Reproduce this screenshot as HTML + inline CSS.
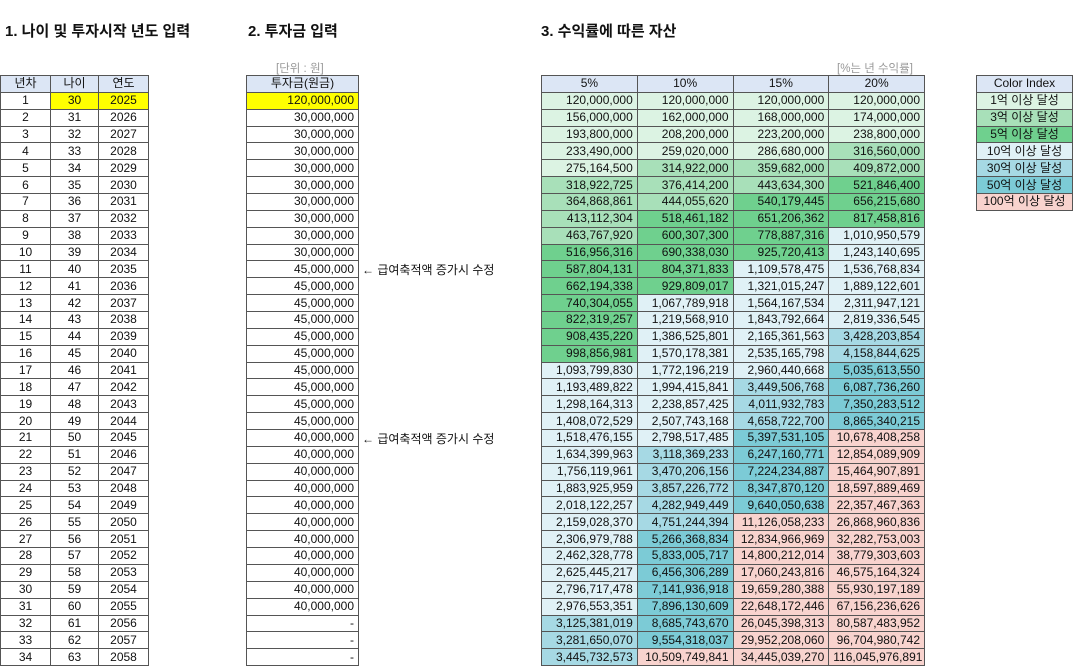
<!DOCTYPE html>
<html><head><meta charset="utf-8"><style>
body{margin:0;width:1074px;height:666px;background:#fff;overflow:hidden;position:relative;font-family:"Liberation Sans","Noto Sans CJK KR",sans-serif;font-size:12px;color:#111}
.t{position:absolute;font-weight:bold;font-size:15px;top:20px}
.n{position:absolute;color:#999;font-size:11.5px;top:60px}
table{position:absolute;border-collapse:collapse;table-layout:fixed;top:75px}
td{border:1px solid #555;height:15.86px;padding:0 4px;line-height:15px;white-space:nowrap;overflow:hidden}
tr:first-child td{background:#dce6f5;text-align:center}
.c td{text-align:center}
.r td{text-align:right}
.y{background:#ffff00!important}
.a{background:#dcf3e3}.b{background:#a8e0b9}.c5{background:#6fd08e}.d{background:#e0f1f6}.e{background:#a6d9e4}.f{background:#7ccbd6}.g{background:#f8d3ce}
.ar{position:absolute;left:362px;font-size:12px}
</style></head><body>
<div class="t" style="left:5px">1. 나이 및 투자시작 년도 입력</div>
<div class="t" style="left:248px">2. 투자금 입력</div>
<div class="t" style="left:541px">3. 수익률에 따른 자산</div>
<div class="n" style="left:276px">[단위 : 원]</div>
<div class="n" style="left:837px">[%는 년 수익률]</div>

<table class="c" style="left:0;width:148px"><colgroup><col style="width:50px"><col style="width:48px"><col style="width:50px"></colgroup>
<tr><td>년차</td><td>나이</td><td>연도</td></tr>
<tr><td>1</td><td class="y">30</td><td class="y">2025</td></tr>
<tr><td>2</td><td>31</td><td>2026</td></tr><tr><td>3</td><td>32</td><td>2027</td></tr><tr><td>4</td><td>33</td><td>2028</td></tr><tr><td>5</td><td>34</td><td>2029</td></tr><tr><td>6</td><td>35</td><td>2030</td></tr><tr><td>7</td><td>36</td><td>2031</td></tr><tr><td>8</td><td>37</td><td>2032</td></tr><tr><td>9</td><td>38</td><td>2033</td></tr><tr><td>10</td><td>39</td><td>2034</td></tr><tr><td>11</td><td>40</td><td>2035</td></tr><tr><td>12</td><td>41</td><td>2036</td></tr><tr><td>13</td><td>42</td><td>2037</td></tr><tr><td>14</td><td>43</td><td>2038</td></tr><tr><td>15</td><td>44</td><td>2039</td></tr><tr><td>16</td><td>45</td><td>2040</td></tr><tr><td>17</td><td>46</td><td>2041</td></tr><tr><td>18</td><td>47</td><td>2042</td></tr><tr><td>19</td><td>48</td><td>2043</td></tr><tr><td>20</td><td>49</td><td>2044</td></tr><tr><td>21</td><td>50</td><td>2045</td></tr><tr><td>22</td><td>51</td><td>2046</td></tr><tr><td>23</td><td>52</td><td>2047</td></tr><tr><td>24</td><td>53</td><td>2048</td></tr><tr><td>25</td><td>54</td><td>2049</td></tr><tr><td>26</td><td>55</td><td>2050</td></tr><tr><td>27</td><td>56</td><td>2051</td></tr><tr><td>28</td><td>57</td><td>2052</td></tr><tr><td>29</td><td>58</td><td>2053</td></tr><tr><td>30</td><td>59</td><td>2054</td></tr><tr><td>31</td><td>60</td><td>2055</td></tr><tr><td>32</td><td>61</td><td>2056</td></tr><tr><td>33</td><td>62</td><td>2057</td></tr><tr><td>34</td><td>63</td><td>2058</td></tr>
</table>

<table class="r" style="left:246px;width:113px">
<tr><td>투자금(원금)</td></tr>
<tr><td class="y">120,000,000</td></tr>
<tr><td>30,000,000</td></tr><tr><td>30,000,000</td></tr><tr><td>30,000,000</td></tr><tr><td>30,000,000</td></tr><tr><td>30,000,000</td></tr><tr><td>30,000,000</td></tr><tr><td>30,000,000</td></tr><tr><td>30,000,000</td></tr><tr><td>30,000,000</td></tr>
<tr><td>45,000,000</td></tr><tr><td>45,000,000</td></tr><tr><td>45,000,000</td></tr><tr><td>45,000,000</td></tr><tr><td>45,000,000</td></tr><tr><td>45,000,000</td></tr><tr><td>45,000,000</td></tr><tr><td>45,000,000</td></tr><tr><td>45,000,000</td></tr><tr><td>45,000,000</td></tr>
<tr><td>40,000,000</td></tr><tr><td>40,000,000</td></tr><tr><td>40,000,000</td></tr><tr><td>40,000,000</td></tr><tr><td>40,000,000</td></tr><tr><td>40,000,000</td></tr><tr><td>40,000,000</td></tr><tr><td>40,000,000</td></tr><tr><td>40,000,000</td></tr><tr><td>40,000,000</td></tr><tr><td>40,000,000</td></tr>
<tr><td>-</td></tr><tr><td>-</td></tr><tr><td>-</td></tr>
</table>
<div class="ar" style="top:261px">← 급여축적액 증가시 수정</div>
<div class="ar" style="top:430px">← 급여축적액 증가시 수정</div>

<table class="r" id="res" style="left:541px;width:384px">
<tr><td>5%</td><td>10%</td><td>15%</td><td>20%</td></tr>
<tr><td>120,000,000</td><td>120,000,000</td><td>120,000,000</td><td>120,000,000</td></tr>
<tr><td>156,000,000</td><td>162,000,000</td><td>168,000,000</td><td>174,000,000</td></tr>
<tr><td>193,800,000</td><td>208,200,000</td><td>223,200,000</td><td>238,800,000</td></tr>
<tr><td>233,490,000</td><td>259,020,000</td><td>286,680,000</td><td>316,560,000</td></tr>
<tr><td>275,164,500</td><td>314,922,000</td><td>359,682,000</td><td>409,872,000</td></tr>
<tr><td>318,922,725</td><td>376,414,200</td><td>443,634,300</td><td>521,846,400</td></tr>
<tr><td>364,868,861</td><td>444,055,620</td><td>540,179,445</td><td>656,215,680</td></tr>
<tr><td>413,112,304</td><td>518,461,182</td><td>651,206,362</td><td>817,458,816</td></tr>
<tr><td>463,767,920</td><td>600,307,300</td><td>778,887,316</td><td>1,010,950,579</td></tr>
<tr><td>516,956,316</td><td>690,338,030</td><td>925,720,413</td><td>1,243,140,695</td></tr>
<tr><td>587,804,131</td><td>804,371,833</td><td>1,109,578,475</td><td>1,536,768,834</td></tr>
<tr><td>662,194,338</td><td>929,809,017</td><td>1,321,015,247</td><td>1,889,122,601</td></tr>
<tr><td>740,304,055</td><td>1,067,789,918</td><td>1,564,167,534</td><td>2,311,947,121</td></tr>
<tr><td>822,319,257</td><td>1,219,568,910</td><td>1,843,792,664</td><td>2,819,336,545</td></tr>
<tr><td>908,435,220</td><td>1,386,525,801</td><td>2,165,361,563</td><td>3,428,203,854</td></tr>
<tr><td>998,856,981</td><td>1,570,178,381</td><td>2,535,165,798</td><td>4,158,844,625</td></tr>
<tr><td>1,093,799,830</td><td>1,772,196,219</td><td>2,960,440,668</td><td>5,035,613,550</td></tr>
<tr><td>1,193,489,822</td><td>1,994,415,841</td><td>3,449,506,768</td><td>6,087,736,260</td></tr>
<tr><td>1,298,164,313</td><td>2,238,857,425</td><td>4,011,932,783</td><td>7,350,283,512</td></tr>
<tr><td>1,408,072,529</td><td>2,507,743,168</td><td>4,658,722,700</td><td>8,865,340,215</td></tr>
<tr><td>1,518,476,155</td><td>2,798,517,485</td><td>5,397,531,105</td><td>10,678,408,258</td></tr>
<tr><td>1,634,399,963</td><td>3,118,369,233</td><td>6,247,160,771</td><td>12,854,089,909</td></tr>
<tr><td>1,756,119,961</td><td>3,470,206,156</td><td>7,224,234,887</td><td>15,464,907,891</td></tr>
<tr><td>1,883,925,959</td><td>3,857,226,772</td><td>8,347,870,120</td><td>18,597,889,469</td></tr>
<tr><td>2,018,122,257</td><td>4,282,949,449</td><td>9,640,050,638</td><td>22,357,467,363</td></tr>
<tr><td>2,159,028,370</td><td>4,751,244,394</td><td>11,126,058,233</td><td>26,868,960,836</td></tr>
<tr><td>2,306,979,788</td><td>5,266,368,834</td><td>12,834,966,969</td><td>32,282,753,003</td></tr>
<tr><td>2,462,328,778</td><td>5,833,005,717</td><td>14,800,212,014</td><td>38,779,303,603</td></tr>
<tr><td>2,625,445,217</td><td>6,456,306,289</td><td>17,060,243,816</td><td>46,575,164,324</td></tr>
<tr><td>2,796,717,478</td><td>7,141,936,918</td><td>19,659,280,388</td><td>55,930,197,189</td></tr>
<tr><td>2,976,553,351</td><td>7,896,130,609</td><td>22,648,172,446</td><td>67,156,236,626</td></tr>
<tr><td>3,125,381,019</td><td>8,685,743,670</td><td>26,045,398,313</td><td>80,587,483,952</td></tr>
<tr><td>3,281,650,070</td><td>9,554,318,037</td><td>29,952,208,060</td><td>96,704,980,742</td></tr>
<tr><td>3,445,732,573</td><td>10,509,749,841</td><td>34,445,039,270</td><td>116,045,976,891</td></tr>
</table>

<table class="c" style="left:976px;width:97px">
<tr><td>Color Index</td></tr>
<tr><td class="a">1억 이상 달성</td></tr>
<tr><td class="b">3억 이상 달성</td></tr>
<tr><td class="c5">5억 이상 달성</td></tr>
<tr><td class="d">10억 이상 달성</td></tr>
<tr><td class="e">30억 이상 달성</td></tr>
<tr><td class="f">50억 이상 달성</td></tr>
<tr><td class="g">100억 이상 달성</td></tr>
</table>
<script>
document.querySelectorAll('#res tr:not(:first-child) td').forEach(function(td){
var v=parseInt(td.textContent.replace(/,/g,''),10)/1e8,c;
if(v>=100)c='g';else if(v>=50)c='f';else if(v>=30)c='e';else if(v>=10)c='d';else if(v>=5)c='c5';else if(v>=3)c='b';else c='a';
td.className=c;});
</script>
</body></html>
